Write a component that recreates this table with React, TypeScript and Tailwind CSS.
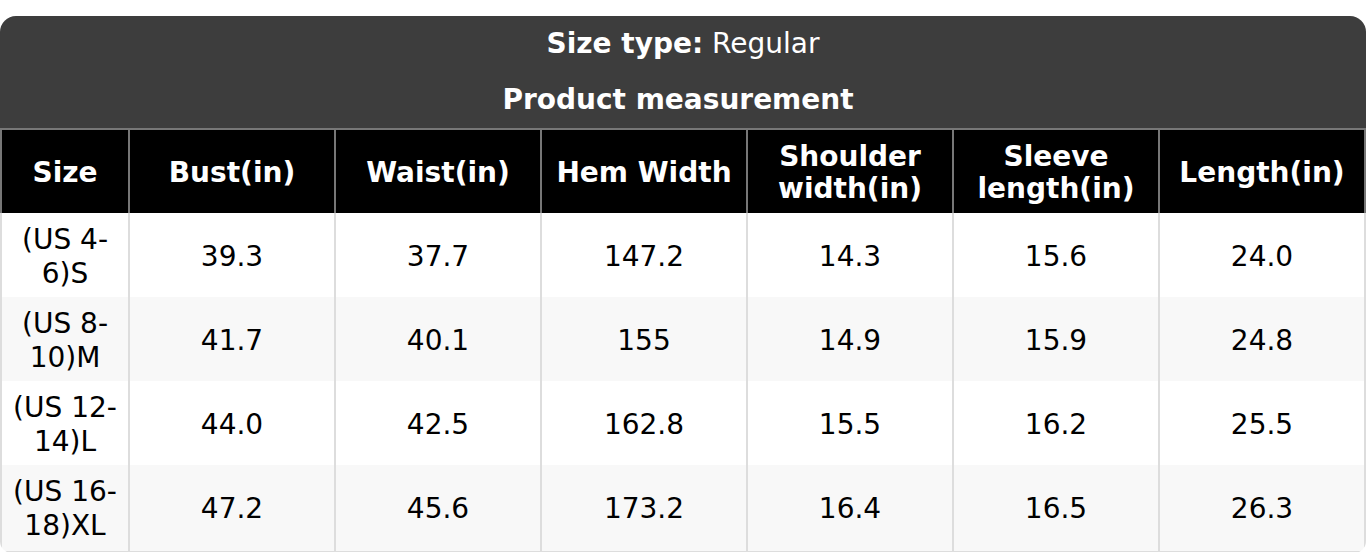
import React from "react";

const headers: string[][] = [
  ["Size"],
  ["Bust(in)"],
  ["Waist(in)"],
  ["Hem Width"],
  ["Shoulder", "width(in)"],
  ["Sleeve", "length(in)"],
  ["Length(in)"],
];

const rows: string[][] = [
  ["(US 4-\n6)S", "39.3", "37.7", "147.2", "14.3", "15.6", "24.0"],
  ["(US 8-\n10)M", "41.7", "40.1", "155", "14.9", "15.9", "24.8"],
  ["(US 12-\n14)L", "44.0", "42.5", "162.8", "15.5", "16.2", "25.5"],
  ["(US 16-\n18)XL", "47.2", "45.6", "173.2", "16.4", "16.5", "26.3"],
];

export default function App() {
  return (
    <div
      className="bg-white pt-4 w-[1366px]"
      style={{ fontFamily: '"DejaVu Sans", "Liberation Sans", sans-serif' }}
    >
      <div className="rounded-t-[16px] rounded-b-[12px] overflow-hidden">
        <div className="bg-[#3d3d3d] text-white text-[28px] h-[112px] flex flex-col">
          <div className="h-[55px] flex items-center justify-center whitespace-pre">
            <span className="font-bold">Size type:</span>
            <span> Regular</span>
          </div>
          <div className="h-[57px] pt-[1px] flex items-center justify-center font-bold pr-[10px]">
            Product measurement
          </div>
        </div>
        <div className="grid grid-cols-[130px_repeat(6,206px)] bg-black border-t-2 border-[#777]">
          {headers.map((h, i) => (
            <div
              key={i}
              className={`h-[83px] pt-[2px] flex flex-col items-center justify-center text-white font-bold text-[28px] leading-[32px] text-center border-r-2 border-[#777] ${
                i === 0 ? "border-l-2" : ""
              }`}
            >
              {h.map((l, j) => (
                <span key={j}>{l}</span>
              ))}
            </div>
          ))}
        </div>
        {rows.map((r, ri) => (
          <div
            key={ri}
            className={`grid grid-cols-[130px_repeat(6,206px)] ${
              ri % 2 === 1 ? "bg-[#f8f8f8]" : "bg-white"
            } ${ri === rows.length - 1 ? "border-b-2 border-[#dddddd]" : ""}`}
          >
            {r.map((c, ci) => (
              <div
                key={ci}
                className={`${ri === rows.length - 1 ? "h-[86px] pb-[2px]" : "h-[84px]"} pt-[4px] flex flex-col items-center justify-center text-black text-[28px] leading-[34px] text-center border-r-2 border-[#dddddd] ${
                  ci === 0 ? "border-l-2" : ""
                }`}
              >
                {c.split("\n").map((l, j) => (
                  <span key={j}>{l}</span>
                ))}
              </div>
            ))}
          </div>
        ))}
      </div>
    </div>
  );
}
